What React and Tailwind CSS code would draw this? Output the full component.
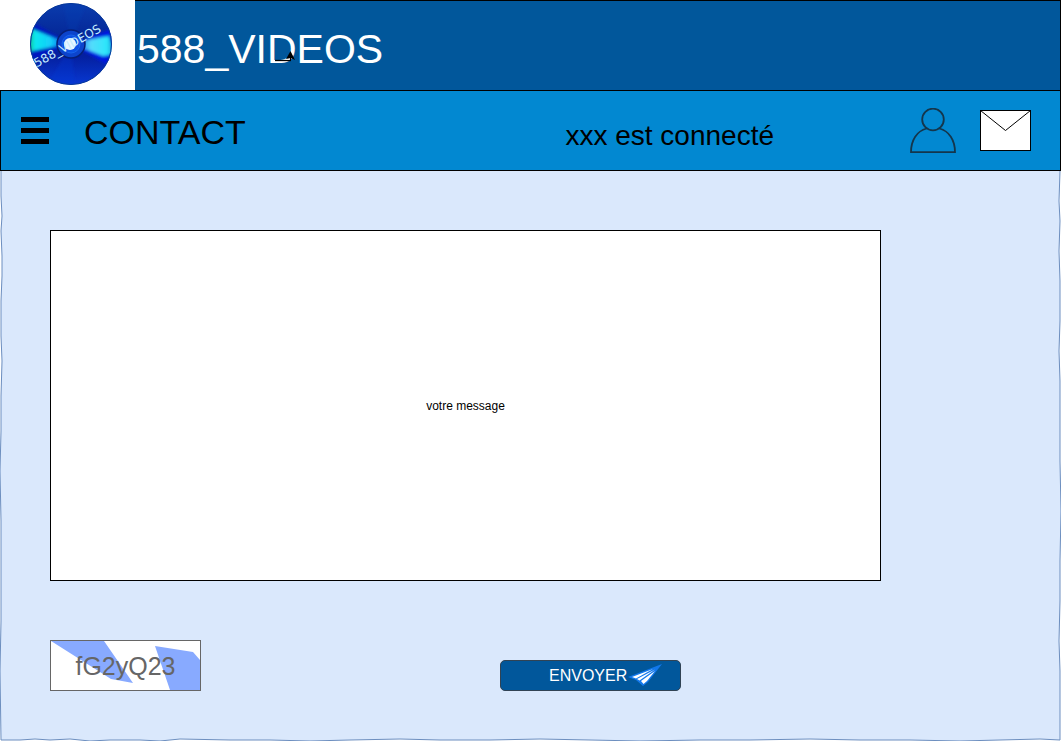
const EDGE =
  "M1 0 L1 25 L2 45 L1 60 L2 85 L2 105 L1 130 L1 165 L2 190 L1 225 L1 260 L0 300 L1 350 L1 400 L1 450 L0 500 L1 569 " +
  "L20 569 L35 568 L50 569 L70 568 L90 570 L110 569 L140 569 L160 570 L180 568 L230 569 L270 569 L310 570 L350 569 L400 568 L440 569 L490 569 L540 568 L590 569 L640 570 L700 569 L750 569 L810 568 L860 569 L910 569 L960 570 L1000 569 L1040 568 L1060 569 " +
  "L1060 530 L1060 500 L1059 470 L1060 430 L1060 390 L1061 340 L1060 290 L1060 240 L1060 210 L1059 180 L1060 150 L1060 110 L1059 80 L1060 50 L1059 30 L1060 0";

function Disc() {
  return (
    <svg className="overflow-visible" width="84" height="84" viewBox="0 0 84 84" aria-hidden="true">
      <defs>
        <linearGradient id="disc" x1="0" y1="0" x2="0" y2="1">
          <stop offset="0" stopColor="#0a3cae" />
          <stop offset="0.35" stopColor="#052a9a" />
          <stop offset="0.65" stopColor="#0420a0" />
          <stop offset="1" stopColor="#0838d2" />
        </linearGradient>
        <linearGradient id="shineLeft" x1="0" y1="0" x2="1" y2="0">
          <stop offset="0" stopColor="#13b45a" />
          <stop offset="0.2" stopColor="#10e6f0" />
          <stop offset="0.6" stopColor="#12ccfa" />
          <stop offset="1" stopColor="#0848e0" />
        </linearGradient>
        <linearGradient id="shineRight" x1="0" y1="0" x2="1" y2="0">
          <stop offset="0" stopColor="#0850e8" />
          <stop offset="0.4" stopColor="#55dcfc" />
          <stop offset="0.8" stopColor="#2be6fa" />
          <stop offset="1" stopColor="#1680c8" />
        </linearGradient>
        <filter id="soft" x="-20%" y="-20%" width="140%" height="140%">
          <feGaussianBlur stdDeviation="1.8" />
        </filter>
        <clipPath id="round">
          <circle cx="42" cy="42" r="41" />
        </clipPath>
      </defs>
      <g clipPath="url(#round)">
        <circle cx="42" cy="42" r="41" fill="url(#disc)" />
        <g filter="url(#soft)">
          <path d="M42 42 L0 18 L0 60 Z" fill="#0018c0" />
          <path d="M42 42 L84 26 L84 66 Z" fill="#0018e0" />
          <path d="M38 39 L28 37 L3 27 L-2 50 L28 44 L38 44 Z" fill="url(#shineLeft)" />
          <path d="M46 40 L58 38 L80 34 L86 52 L74 54 L56 47 L46 45 Z" fill="url(#shineRight)" />
          <path d="M42 42 L18 84 L46 84 Z" fill="#0c38d8" opacity="0.3" />
          <path d="M42 42 L34 0 L58 0 Z" fill="#1448c0" opacity="0.2" />
        </g>
      </g>
      <circle cx="42" cy="42" r="40.5" fill="none" stroke="#0a3a9a" />
      <circle cx="42" cy="42" r="14" fill="#0c44cc" stroke="#061f78" strokeWidth="1.5" />
      <circle cx="42" cy="42" r="9" fill="#0b50e4" stroke="#1a64ea" />
      <circle cx="41" cy="42" r="6" fill="#e8f6ff" />
      <text x="38" y="48" textAnchor="middle" transform="rotate(-29 38 43)" fill="#c4ecff" fontSize="12" fontFamily="DejaVu Sans, sans-serif">
        588_VIDEOS
      </text>
    </svg>
  );
}

function Pointer() {
  return (
    <svg className="absolute left-[138px] top-1/2" width="22" height="18" viewBox="0 0 22 18" aria-hidden="true">
      <path d="M2 14.5 H18" stroke="#000" strokeWidth="1.3" />
      <path d="M12 13.5 L16 12 V13.5 Z" fill="#fff" />
      <path d="M17.5 5 L22 14 L18 12 L13 13 Z" fill="#000" />
      <path d="M17.5 11 V15" stroke="#000" />
    </svg>
  );
}

function UserIcon() {
  return (
    <svg width="46" height="46" viewBox="0 0 46 46" fill="none" stroke="#14364c" strokeWidth="1.8" aria-hidden="true">
      <circle cx="23" cy="11.5" r="10.8" />
      <path d="M16.5 20.5 C7 23 1 32 1 44.2 H45 C45 32 39 23 29.5 20.5" />
    </svg>
  );
}

function MailIcon() {
  return (
    <svg width="51" height="41" viewBox="0 0 51 41" aria-hidden="true">
      <rect x="0.5" y="0.5" width="50" height="40" fill="#fff" stroke="#000" />
      <path d="M0.5 0.5 L25.5 20.5 L50.5 0.5" fill="none" stroke="#000" />
    </svg>
  );
}

function PlaneIcon() {
  return (
    <svg width="36" height="24" viewBox="0 0 36 24" aria-hidden="true">
      <path d="M35 0 L1 13 L9 16 L16 22 L21 18 Z" fill="#1278ec" />
      <path d="M26 5 L5 13 L9 14.5 Z" fill="#fff" />
      <path d="M28 5.5 L10 15 L12.5 16.5 Z" fill="#fff" />
      <path d="M28 7 L14 17 L16.5 20 L20 17 Z" fill="#fff" />
    </svg>
  );
}

export default function App() {
  return (
    <div className="bg-white font-['Liberation_Sans',Arial,sans-serif] text-black">
      <header className="flex h-[90px] bg-[#01579b]">
        <a href="#accueil" aria-label="Accueil" className="flex w-[135px] justify-center bg-white pt-0.5 pl-1.5">
          <Disc />
        </a>
        <div className="relative flex flex-1 items-center border-t border-r border-black pt-1.5 pl-0.5">
          <h1 className="text-[41px] leading-[48px] text-white">588_VIDEOS</h1>
          <Pointer />
        </div>
      </header>

      <nav className="flex h-[81px] items-center border border-black bg-[#0288d1] pr-[29px] pl-5">
        <button type="button" aria-label="Menu" className="flex w-7 flex-col gap-1.5">
          <span className="h-[5px] bg-black" />
          <span className="h-[5px] bg-black" />
          <span className="h-[5px] bg-black" />
        </button>
        <h2 className="ml-[35px] pt-0.5 text-[34px] leading-10">CONTACT</h2>
        <p className="ml-auto pt-2.5 text-[28px] leading-8">xxx est connecté</p>
        <a href="#profil" aria-label="Profil" className="ml-[136px]">
          <UserIcon />
        </a>
        <a href="#messages" aria-label="Messages" className="ml-6">
          <MailIcon />
        </a>
      </nav>

      <main className="relative isolate px-[50px] pt-[59px] pb-[50px]">
        <svg className="absolute inset-0 -z-10 h-full w-full" viewBox="0 0 1061 570" preserveAspectRatio="none" aria-hidden="true">
          <path d={EDGE} fill="#dae8fc" stroke="#6c8ebf" vectorEffect="non-scaling-stroke" />
        </svg>
        <form className="max-w-[831px]" onSubmit={(event) => event.preventDefault()}>
          <textarea
            aria-label="Votre message"
            placeholder="votre message"
            className="block h-[351px] w-full resize-none border border-black bg-white pt-[167px] text-center text-xs outline-none placeholder:text-black"
          />
          <div className="mt-[59px] flex items-end">
            <div className="relative isolate flex h-[51px] w-[151px] items-center justify-center border border-[#666] bg-white">
              <svg className="absolute inset-0 -z-10 h-full w-full" viewBox="0 0 149 49" aria-hidden="true">
                <path d="M0 0 H53 L82 42 L60 38 Z M104 5 L142 11 L149 19 V49 H119 Z" fill="#88aaff" />
              </svg>
              <span className="text-[25px] leading-7 text-[#666]">fG2yQ23</span>
            </div>
            <button
              type="submit"
              className="ml-[299px] flex h-[31px] w-[181px] items-center rounded-[5px] border border-[#314354] bg-[#01579b] pl-12 text-base text-white"
            >
              ENVOYER
              <PlaneIcon />
            </button>
          </div>
        </form>
      </main>
    </div>
  );
}
